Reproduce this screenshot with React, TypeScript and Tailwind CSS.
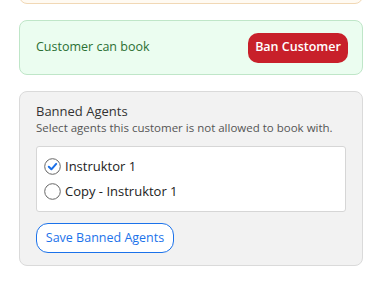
export default function App() {
  const agents = [
    { id: "1", name: "Instruktor 1", banned: true },
    { id: "2", name: "Copy - Instruktor 1", banned: false },
  ];

  return (
    <div className="flex min-h-[285px] flex-col gap-4 bg-white pl-[19px] pr-[26px] [font-family:'Open_Sans',sans-serif]">
      <div className="-mt-[12px] h-[16px] rounded-[12px] border border-[#f1d8b5] bg-[#fffaf2]" />

      <div className="flex h-[55px] items-center justify-between rounded-[8px] border border-[#bfe6c8] bg-[#ebfdf0] pl-[16px] pr-[14px]">
        <span className="text-[12.5px] text-[#2b7034]">Customer can book</span>
        <button
          type="button"
          className="h-[30px] w-[100px] rounded-[10px] bg-[#c8202a] text-[12.5px] font-semibold text-white"
        >
          Ban Customer
        </button>
      </div>

      <div className="flex flex-col rounded-[8px] border border-[#dadada] bg-[#f2f2f2] px-[16px] pb-[12px] pt-[10px]">
        <p className="text-[13px] leading-[18px] text-[#333]">Banned Agents</p>
        <p className="text-[11.5px] leading-[16px] text-[#555]">
          Select agents this customer is not allowed to book with.
        </p>
        <div className="mt-[10px] flex flex-col gap-[8px] rounded-[3px] border border-[#d6d6d6] bg-white px-[7px] py-[11px]">
          {agents.map((a) => (
            <label key={a.id} className="flex h-[17px] items-center gap-[4px] text-[13px] text-[#222]">
              {a.banned ? (
                <svg width="17" height="17" viewBox="0 0 17 17">
                  <circle cx="8.5" cy="8.5" r="7.8" fill="white" stroke="#666" strokeWidth="1" />
                  <path d="M4.8 8.8 L7.4 11.3 L12.2 5.9" fill="none" stroke="#1a6fe8" strokeWidth="2" strokeLinecap="round" strokeLinejoin="round" />
                </svg>
              ) : (
                <svg width="17" height="17" viewBox="0 0 17 17">
                  <circle cx="8.5" cy="8.5" r="7.8" fill="white" stroke="#666" strokeWidth="1" />
                </svg>
              )}
              {a.name}
            </label>
          ))}
        </div>
        <button
          type="button"
          className="mt-[11px] h-[30px] w-[138px] rounded-[12px] border border-[#1b72ea] bg-white text-[12.5px] font-medium text-[#1b72ea]"
        >
          Save Banned Agents
        </button>
      </div>
    </div>
  );
}
